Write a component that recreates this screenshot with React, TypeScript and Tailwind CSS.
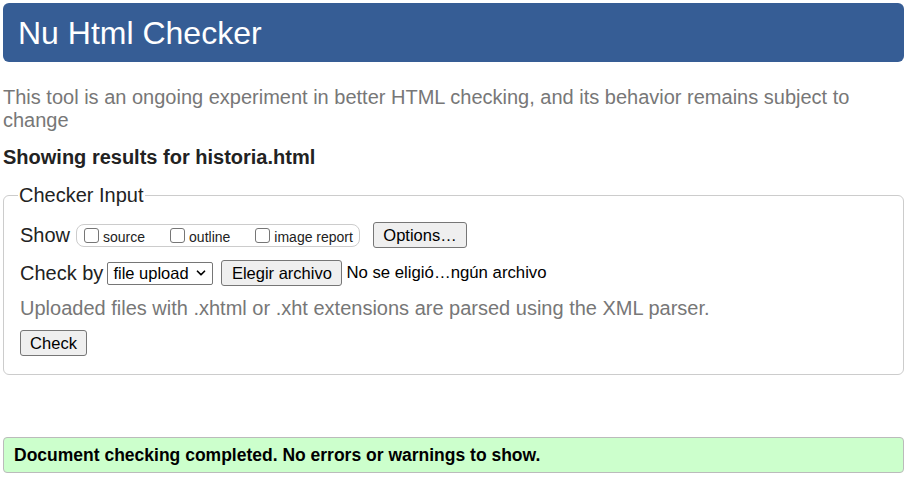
import { ChevronDown } from 'lucide-react';

function Checkbox({ label }: { label: string }) {
    return (
        <label className="flex items-center shrink-0 whitespace-nowrap">
            <span className="w-[15px] h-[15px] shrink-0 ml-[7px] mr-[4px] rounded-[3px] border border-[#767676] bg-white" />
            <span className="text-[14px] leading-none pt-[3px] text-[#222]">{label}</span>
        </label>
    );
}

function NativeButton({ children, className = '' }: { children: React.ReactNode; className?: string }) {
    return (
        <button
            className={`h-[26px] shrink-0 whitespace-nowrap px-[9px] bg-[#efefef] border border-[#767676] rounded-[3px] text-[16.5px] text-black leading-none ${className}`}
        >
            {children}
        </button>
    );
}

export default function App() {
    return (
        <div
            className="w-[910px] h-[478px] bg-white pl-[3px] pr-[6px] pt-[3px] text-[#222]"
            style={{ fontFamily: '"Liberation Sans", Arial, sans-serif' }}
        >
            <header className="h-[59px] rounded-[6px] bg-[#365d95] pl-[15px] pt-[12px]">
                <h1 className="text-[32px] leading-[37px] text-white">Nu Html Checker</h1>
            </header>

            <p className="mt-[24px] text-[20px] leading-[23px] text-[#777]">
                This tool is an ongoing experiment in better HTML checking, and its behavior remains subject to change
            </p>

            <h2 className="mt-[14px] text-[20px] leading-[23px] font-bold text-[#222]">
                Showing results for historia.html
            </h2>

            <fieldset className="mt-[15px] h-[191px] border border-[#ccc] rounded-[6px] px-[16px] pb-[14px]">
                <legend className="ml-[-2px] px-[1px] text-[20px] leading-[23px] text-[#222]">Checker Input</legend>

                <div className="flex items-center mt-[15px] h-[26px]">
                    <span className="text-[20px] leading-none mr-[6px]">Show</span>
                    <div className="flex items-center shrink-0 h-[23px] w-[284px] border border-[#ccc] rounded-[8px]">
                        <Checkbox label="source" />
                        <span className="w-[18px] shrink-0" />
                        <Checkbox label="outline" />
                        <span className="w-[18px] shrink-0" />
                        <Checkbox label="image report" />
                    </div>
                    <NativeButton className="ml-[13px] w-[94px]">Options…</NativeButton>
                </div>

                <div className="flex items-center mt-[12px] h-[26px]">
                    <span className="text-[20px] leading-none mr-[4px]">Check by</span>
                    <div className="flex items-center justify-between shrink-0 h-[23px] w-[106px] border border-[#767676] rounded-[2px] pl-[5px] pr-[4px] text-[16.5px] text-black">
                        <span>file upload</span>
                        <ChevronDown size={14} strokeWidth={3} />
                    </div>
                    <NativeButton className="ml-[8px] w-[121px]">Elegir archivo</NativeButton>
                    <span className="ml-[4px] text-[16.75px] text-black">No se eligió…ngún archivo</span>
                </div>

                <p className="mt-[11px] text-[20px] leading-[23px] text-[#777]">
                    Uploaded files with .xhtml or .xht extensions are parsed using the XML parser.
                </p>

                <NativeButton className="mt-[10px] w-[67px]">Check</NativeButton>
            </fieldset>

            <div className="mt-[62px] h-[36px] flex items-center border border-[#bbb] rounded-[4px] bg-[#ccffcc] pl-[10px]">
                <span className="text-[17.5px] font-bold text-black">
                    Document checking completed. No errors or warnings to show.
                </span>
            </div>
        </div>
    );
}
